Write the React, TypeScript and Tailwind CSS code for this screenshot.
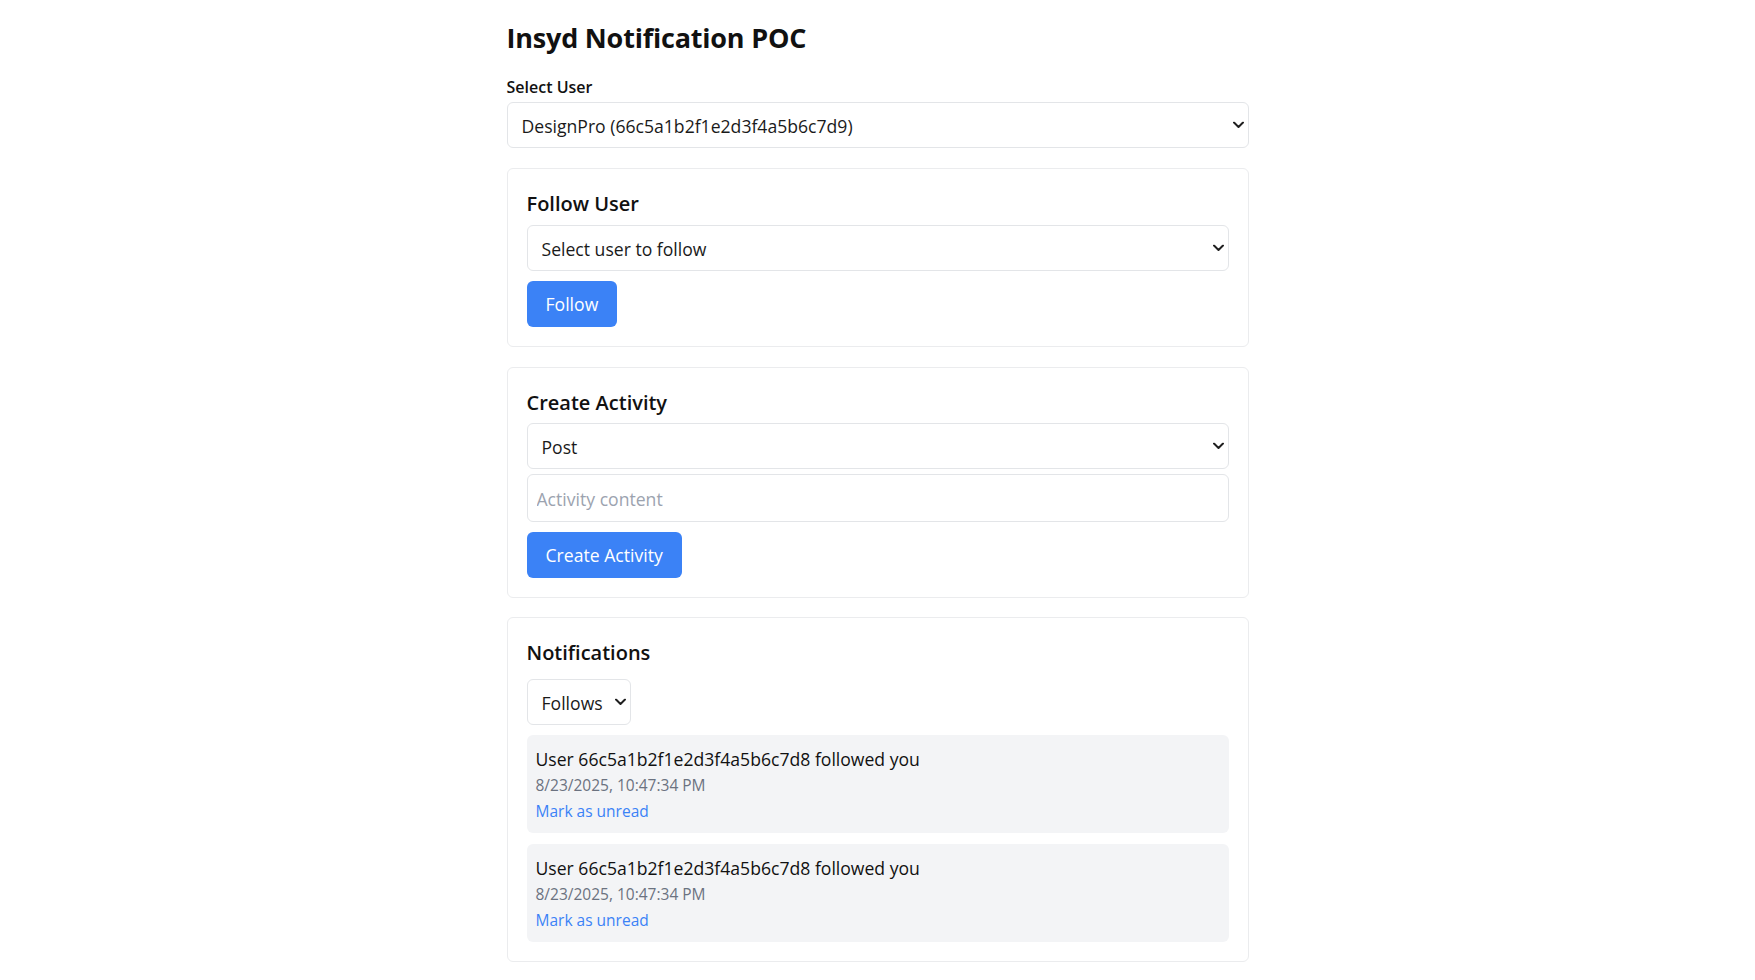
import { useState } from 'react';

const users = [
  { id: '66c5a1b2f1e2d3f4a5b6c7d9', name: 'DesignPro' },
  { id: '66c5a1b2f1e2d3f4a5b6c7d8', name: 'CodeNinja' },
];

const notifications = [
  { id: 1, text: 'User 66c5a1b2f1e2d3f4a5b6c7d8 followed you', time: '8/23/2025, 10:47:34 PM' },
  { id: 2, text: 'User 66c5a1b2f1e2d3f4a5b6c7d8 followed you', time: '8/23/2025, 10:47:34 PM' },
];

function Chevron() {
  return (
    <svg width="11" height="7" viewBox="0 0 11 7" className="pointer-events-none absolute right-[5px] top-1/2 -translate-y-1/2">
      <polyline points="1,1 5.5,5.5 10,1" fill="none" stroke="#1f1f1f" strokeWidth="2" strokeLinecap="round" strokeLinejoin="round" />
    </svg>
  );
}

function Select({ value, options, onChange, className = '' }: { value: string; options: { value: string; label: string }[]; onChange: (v: string) => void; className?: string }) {
  return (
    <div className={`relative ${className}`}>
      <select
        value={value}
        onChange={(e) => onChange(e.target.value)}
        className="w-full h-[46px] appearance-none rounded-md border border-[#e3e5e8] bg-white pl-[14px] pr-[18px] pt-[2px] text-[17.6px] text-[#1a1a1a] outline-none"
      >
        {options.map((o) => (
          <option key={o.value} value={o.value}>{o.label}</option>
        ))}
      </select>
      <Chevron />
    </div>
  );
}

export default function App() {
  const [currentUser, setCurrentUser] = useState(users[0].id);
  const [followTarget, setFollowTarget] = useState('');
  const [activityType, setActivityType] = useState('post');
  const [content, setContent] = useState('');
  const [filter, setFilter] = useState('follows');

  return (
    <div className="min-h-screen bg-white font-['Open_Sans','Noto_Sans',sans-serif] text-[#111]">
      <div className="w-[742px] mx-auto pt-[20px] pb-10">
        <h1 className="text-[27px] leading-[36px] font-bold tracking-[-0.2px]">Insyd Notification POC</h1>

        <label className="block mt-[19px] mb-[3px] text-[16px] leading-[24px] font-semibold">Select User</label>
        <Select
          value={currentUser}
          onChange={setCurrentUser}
          options={users.map((u) => ({ value: u.id, label: `${u.name} (${u.id})` }))}
        />

        <div className="mt-[20px] rounded-md border border-[#ebecee] p-[19px]">
          <h2 className="text-[20px] leading-[32px] font-semibold mb-[5px]">Follow User</h2>
          <Select
            value={followTarget}
            onChange={setFollowTarget}
            options={[{ value: '', label: 'Select user to follow' }, ...users.slice(1).map((u) => ({ value: u.id, label: u.name }))]}
          />
          <button className="mt-[10px] h-[46px] px-[19px] rounded-md bg-[#3b82f6] text-white text-[17.6px]">Follow</button>
        </div>

        <div className="mt-[20px] rounded-md border border-[#ebecee] p-[19px]">
          <h2 className="text-[20px] leading-[32px] font-semibold mb-[4px]">Create Activity</h2>
          <Select
            value={activityType}
            onChange={setActivityType}
            options={[
              { value: 'post', label: 'Post' },
              { value: 'comment', label: 'Comment' },
              { value: 'like', label: 'Like' },
            ]}
          />
          <input
            value={content}
            onChange={(e) => setContent(e.target.value)}
            placeholder="Activity content"
            className="mt-[5px] block w-full h-[48px] rounded-md border border-[#e3e5e8] px-[9px] pt-[2px] text-[17.6px] outline-none placeholder:text-[#9ca3af]"
          />
          <button className="mt-[10px] h-[46px] px-[19px] rounded-md bg-[#3b82f6] text-white text-[17.6px]">Create Activity</button>
        </div>

        <div className="mt-[19px] rounded-md border border-[#ebecee] p-[19px]">
          <h2 className="text-[20px] leading-[32px] font-semibold mb-[10px]">Notifications</h2>
          <Select
            className="w-[104px]"
            value={filter}
            onChange={setFilter}
            options={[
              { value: 'all', label: 'All' },
              { value: 'follows', label: 'Follows' },
              { value: 'activities', label: 'Activities' },
            ]}
          />
          <div className="mt-[10px] flex flex-col gap-[11px]">
            {notifications.map((n) => (
              <div key={n.id} className="rounded-md bg-[#f3f4f6] px-[9px] pt-[11px] pb-[9px]">
                <p className="text-[17.6px] leading-[26px]">{n.text}</p>
                <p className="text-[15.5px] leading-[26px] text-[#6b7280]">{n.time}</p>
                <button className="block text-[15.5px] leading-[26px] text-[#3b82f6]">Mark as unread</button>
              </div>
            ))}
          </div>
        </div>
      </div>
    </div>
  );
}
